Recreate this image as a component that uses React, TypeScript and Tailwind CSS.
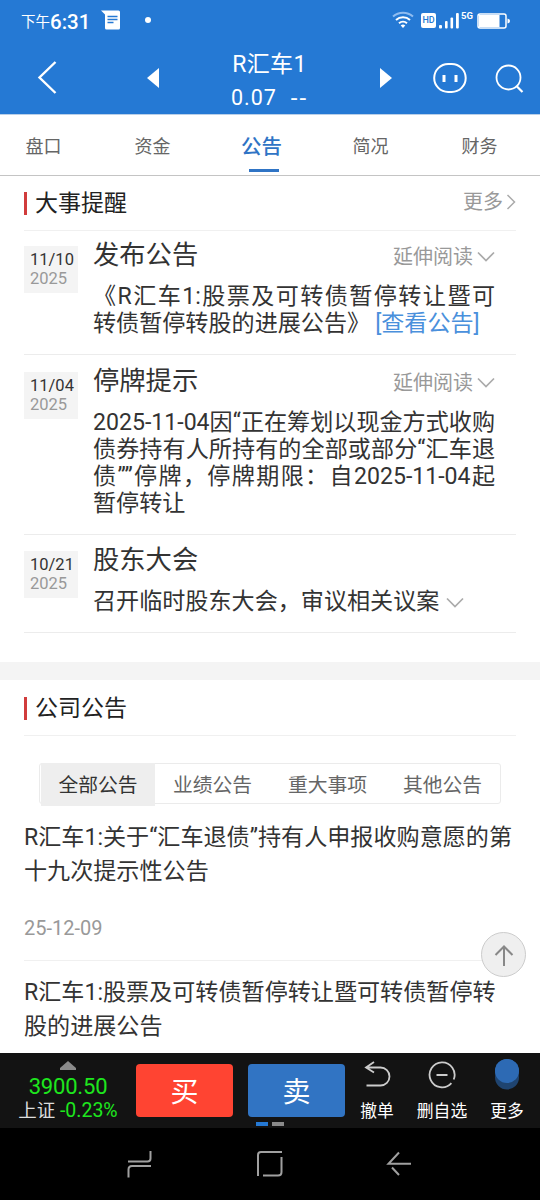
import { useState, type ReactNode } from "react";

const TABS = ["盘口", "资金", "公告", "简况", "财务"];

const FILTERS = ["全部公告", "业绩公告", "重大事项", "其他公告"];

const NOTICES = [
  {
    title: "R汇车1:关于“汇车退债”持有人申报收购意愿的第十九次提示性公告",
    date: "25-12-09",
  },
  {
    title: "R汇车1:股票及可转债暂停转让暨可转债暂停转股的进展公告",
    date: "25-11-10",
  },
];

function ChevronDown({ className = "" }: { className?: string }) {
  return (
    <svg className={className} width="18" height="12" viewBox="0 0 18 12" fill="none" stroke="#aaa" strokeWidth="1.7">
      <path d="M1 1.5 9 9.5 17 1.5" />
    </svg>
  );
}

function StatusBar() {
  return (
    <div className="flex h-10 items-center pl-[21px] pr-[30px]">
      <span className="mt-[6px] text-[14.5px] leading-none">下午</span>
      <span className="mt-[4px] text-[20.5px] leading-none font-medium">6:31</span>
      <svg className="ml-[11px]" width="20" height="20" viewBox="0 0 20 20">
        <path d="M0 .5h17.5a1.5 1.5 0 0 1 1.5 1.5v16a1.5 1.5 0 0 1-1.5 1.5h-12A1.5 1.5 0 0 1 4 18V4.500z" fill="#fff" />
        <path d="M6.500 6.500h10M6.500 9.500h10M6.500 12.500h6" stroke="#2579d4" strokeWidth="1.3" />
      </svg>
      <span className="ml-[24px] size-[6px] rounded-full bg-white" />
      <div className="ml-auto flex items-center">
        <svg width="22" height="18" viewBox="0 0 22 18" fill="none" stroke="#fff" strokeWidth="2">
          <path d="M1 5.500a15 15 0 0 1 20 0" stroke="#8fbcf0" />
          <path d="M4 9a10.500 10.500 0 0 1 14 0M7 12.300a6 6 0 0 1 8 0" />
          <path d="M8.700 14.500a3.500 3.500 0 0 1 4.600 0L11 17z" fill="#fff" stroke="none" />
        </svg>
        <span className="ml-[7px] flex h-[15px] w-[15px] items-center justify-center rounded-[2px] bg-white text-[9px] leading-none font-medium text-[#2579d4]">
          HD
        </span>
        <svg className="ml-[3px]" width="20" height="17" viewBox="0 0 20 17" fill="#fff">
          <rect x="0" y="13" width="3" height="3.500" rx="1" />
          <rect x="6" y="9" width="2.600" height="7.500" rx="1" />
          <rect x="11.500" y="5.500" width="2.600" height="11" rx="1" />
          <rect x="17" y="1" width="2.800" height="15.500" rx="1" />
        </svg>
        <span className="-mt-[8px] ml-[2px] text-[9.5px] leading-none font-bold">5G</span>
        <svg className="mt-px ml-[4px]" width="33" height="16" viewBox="0 0 33 16">
          <rect x="1" y="1" width="28" height="14" rx="2" fill="#2579d4" stroke="#fff" strokeWidth="1.500" />
          <rect x="2" y="2" width="20.500" height="12" fill="#fff" />
          <path d="M30.500 5.500q2.500.5 2.500 2.500t-2.500 2.500z" fill="#fff" />
        </svg>
      </div>
    </div>
  );
}

function Header() {
  return (
    <header className="h-[115px] border-b border-[#b9cfe8] bg-[#2579d4] text-white">
      <StatusBar />
      <div className="flex h-[76px] items-center pr-[15px] pl-[37px]">
        <svg className="-mt-[2px]" width="21" height="34" viewBox="0 0 21 34" fill="none" stroke="#fff" strokeWidth="2.400">
          <path d="M18.500 2 2.500 17.500 18.500 33" />
        </svg>
        <svg className="ml-[89px]" width="12" height="20" viewBox="0 0 12 20" fill="#fff">
          <path d="M12 0v20L0 10z" />
        </svg>
        <div className="flex w-[221px] flex-col items-center">
          <h1 className="mt-[5px] text-[23px] leading-[34px] tracking-[0.3px]">R汇车1</h1>
          <div className="flex text-[21.5px] leading-[32px] tracking-[1px]">
            <span>0.07</span>
            <span className="ml-[14px] text-[24px] tracking-[2px]">--</span>
          </div>
        </div>
        <svg width="12" height="20" viewBox="0 0 12 20" fill="#fff">
          <path d="M0 0v20l12-10z" />
        </svg>
        <svg className="ml-[41px]" width="34" height="30" viewBox="0 0 34 30" fill="none" stroke="#fff" strokeWidth="2">
          <rect x="1.200" y="1" width="31.500" height="28" rx="14" />
          <path d="M11 12v7M23 12v7" strokeWidth="3" />
        </svg>
        <svg className="ml-[28px]" width="29" height="29" viewBox="0 0 29 29" fill="none" stroke="#fff" strokeWidth="1.800">
          <circle cx="13.500" cy="13.500" r="12" />
          <path d="M21.500 22 27.500 28" strokeWidth="2.200" />
        </svg>
      </div>
    </header>
  );
}

function SectionTitle({ children, more }: { children: ReactNode; more?: boolean }) {
  return (
    <div className="mx-6 flex h-[55px] items-center justify-between border-b border-[#f0f0f0]">
      <div className="flex items-center">
        <span className="h-[23px] w-[3px] bg-[#d13c3c]" />
        <h2 className="mt-[2px] ml-[8px] text-[23px] leading-[30px] text-[#222]">{children}</h2>
      </div>
      {more && (
        <span className="-mt-[3px] flex items-center text-[20px] leading-[30px] text-[#999]">
          更多
          <svg className="mt-px ml-[3px]" width="10" height="16" viewBox="0 0 10 16" fill="none" stroke="#aaa" strokeWidth="1.500">
            <path d="M1.500 1 8.500 8 1.500 15" />
          </svg>
        </span>
      )}
    </div>
  );
}

function EventItem({
  day,
  title,
  more,
  className,
  children,
}: {
  day: string;
  title: string;
  more?: boolean;
  className: string;
  children: ReactNode;
}) {
  return (
    <article className={`mx-6 flex items-start border-b border-[#ececec] ${className}`}>
      <div className="mt-[15px] h-[47px] w-[54px] bg-[#f4f4f4] pt-[4px] pl-[6px] text-[16.500px] leading-[19px]">
        <div className="text-[#333]">{day}</div>
        <div className="text-[#999]">2025</div>
      </div>
      <div className="ml-[15px] w-[402px]">
        <div className="mt-px flex h-[46px] items-center justify-between">
          <h3 className="text-[26.300px] leading-[38px] text-[#333]">{title}</h3>
          {more && (
            <span className="mt-[4px] flex items-center text-[20px] leading-[30px] text-[#999]">
              延伸阅读
              <ChevronDown className="ml-[4px]" />
            </span>
          )}
        </div>
        <div className="mt-[5px] text-justify text-[23.100px] leading-[27px] text-[#333]">{children}</div>
      </div>
    </article>
  );
}

function BottomBar() {
  return (
    <div className="relative flex h-[75px] shrink-0 bg-[#131313] text-white">
      <div className="flex w-[136px] flex-col items-center">
        <svg className="mt-[8px]" width="16" height="9" viewBox="0 0 16 9" fill="#8a8a8a">
          <path d="M8 0 16 7v2H0V7z" />
        </svg>
        <span className="mt-[3px] text-[22px] leading-[27px] tracking-[-0.2px] text-[#1ee61e]">3900.50</span>
        <span className="text-[18.500px] leading-[22px] whitespace-nowrap text-[#ddd]">
          上证 <span className="text-[19.500px] text-[#1ee61e]">-0.23%</span>
        </span>
      </div>
      <button className="mt-[11px] h-[53px] w-[97px] rounded-[4px] bg-[#ff4432] pt-[5px] text-[28px]">买</button>
      <button className="mt-[11px] ml-[15px] h-[53px] w-[97px] rounded-[4px] bg-[#3174c3] pt-[5px] text-[28px]">卖</button>
      <div className="flex w-[64px] flex-col items-center pt-[8px]">
        <svg width="28" height="28" viewBox="0 0 28 28" fill="none" stroke="#ccc" strokeWidth="1.800">
          <path d="M11 1 3 6.500 11 11.500M3 6.500h14.500a9 9 0 0 1 0 18H3.500" />
        </svg>
        <span className="mt-[9px] text-[16.800px] leading-[26px]">撤单</span>
      </div>
      <div className="flex w-[66px] flex-col items-center pt-[8px]">
        <svg width="28" height="28" viewBox="0 0 28 28" fill="none" stroke="#ccc" strokeWidth="1.800">
          <path d="M25.700 18.500A12.500 12.500 0 1 0 23.400 22.200" />
          <path d="M8.500 14h11" strokeWidth="2" />
        </svg>
        <span className="mt-[9px] text-[16.800px] leading-[26px]">删自选</span>
      </div>
      <div className="flex w-[64px] flex-col items-center pt-[5px]">
        <svg width="26" height="32" viewBox="0 0 26 32">
          <circle cx="13" cy="13" r="12" fill="#28609f" />
          <circle cx="13" cy="19.500" r="12" fill="#1f4470" />
          <circle cx="13" cy="13" r="12" fill="#2d6ab4" />
        </svg>
        <span className="mt-[8px] text-[16.800px] leading-[26px]">更多</span>
      </div>
      {/* page indicator */}
      <div className="absolute bottom-[2px] left-[256px] flex gap-[4px]">
        <span className="h-[4px] w-[12px] bg-[#2579d4]" />
        <span className="h-[4px] w-[12px] bg-[#8a8a8a]" />
      </div>
    </div>
  );
}

function SystemNav() {
  return (
    <div className="flex h-[72px] shrink-0 items-center bg-black pl-[127px]">
      <svg width="25" height="28" viewBox="0 0 25 28" fill="none" stroke="#a0a0a0" strokeWidth="2">
        <path d="M23.500 1v7.500q0 3-3 3H1M24 16H5q-3.500 0-3.500 3.500v8" />
      </svg>
      <svg className="ml-[104px]" width="27" height="26" viewBox="0 0 27 26" fill="none" stroke="#a0a0a0" strokeWidth="2">
        <path d="M26 1H5Q2 1 2 4v21" />
        <path d="M25.500 6v15q0 3.500-3.500 3.500H7" />
      </svg>
      <svg className="ml-[103px]" width="26" height="26" viewBox="0 0 26 26" fill="none" stroke="#a0a0a0" strokeWidth="2">
        <path d="M13 1.500 2.500 12.700H25M6 16.500 13 24" />
      </svg>
    </div>
  );
}

export default function App() {
  const [tab, setTab] = useState(2);
  const [filter, setFilter] = useState(0);

  return (
    <div className="relative flex h-[1200px] w-[540px] flex-col overflow-hidden bg-white font-['Roboto','Noto_Sans_CJK_SC',sans-serif]">
      <Header />

      <nav className="-ml-[11px] flex h-[61px] w-[551px] shrink-0 border-b border-[#c4c4c4]">
        {TABS.map((label, i) => (
          <button
            key={label}
            onClick={() => setTab(i)}
            className={
              i === tab
                ? "flex w-[109px] flex-col items-center text-[20.500px] font-medium text-[#2f74c5]"
                : "flex w-[109px] flex-col items-center text-[18px] text-[#666]"
            }
          >
            <span className="mt-[17px] leading-[30px]">{label}</span>
            {i === tab && <span className="mt-[7px] ml-[5px] h-[3px] w-[30px] bg-[#2f74c5]" />}
          </button>
        ))}
      </nav>

      <main className="min-h-0 flex-1 overflow-hidden">
        <SectionTitle more>大事提醒</SectionTitle>

        <EventItem day="11/10" title="发布公告" more className="h-[124px]">
          《R汇车1:股票及可转债暂停转让暨可转债暂停转股的进展公告》
          <a className="ml-[5px] text-[#4a90dc]">[查看公告]</a>
        </EventItem>
        <EventItem day="11/04" title="停牌提示" more className="h-[180px] pt-[2px]">
          2025-11-04因“正在筹划以现金方式收购债券持有人所持有的全部或部分“汇车退债””停牌，停牌期限：自2025-11-04起暂停转让
        </EventItem>
        <EventItem day="10/21" title="股东大会" className="h-[98px] pt-px">
          召开临时股东大会，审议相关议案
          <ChevronDown className="ml-[7px] inline" />
        </EventItem>

        <div className="mt-[29px] h-[18px] bg-[#f4f4f4]" />

        <div className="pt-px">
          <SectionTitle>公司公告</SectionTitle>
        </div>

        <div className="mx-[39px] mt-[27px] flex h-[41px] rounded-[3px] border border-[#ebebeb] pl-px">
          {FILTERS.map((label, i) => (
            <button
              key={label}
              onClick={() => setFilter(i)}
              className={
                i === filter
                  ? "-mt-px h-[43px] w-[114px] bg-[#eee] pt-[3px] text-[19.800px] leading-[40px] text-[#333]"
                  : "-mt-px h-[43px] flex-1 pt-[3px] text-[19.800px] leading-[40px] text-[#666]"
              }
            >
              {label}
            </button>
          ))}
        </div>

        <div className="mx-6 mt-[17px]">
          {NOTICES.map((n) => (
            <article key={n.title} className="mb-[15px] h-[140px] border-b border-[#f0f0f0]">
              <h3 className="text-[23.100px] leading-[34px] text-[#333]">{n.title}</h3>
              <p className="mt-[24px] text-[20px] leading-[30px] text-[#999]">{n.date}</p>
            </article>
          ))}
        </div>
      </main>

      {/* back to top */}
      <button className="absolute top-[932px] left-[481px] flex size-[45px] items-center justify-center rounded-full border border-[#ccc] bg-[#efefef]">
        <svg width="20" height="22" viewBox="0 0 20 22" fill="none" stroke="#888" strokeWidth="2">
          <path d="M10 22V3M1.500 11 10 2.500 18.500 11" />
        </svg>
      </button>

      <BottomBar />
      <SystemNav />
    </div>
  );
}
